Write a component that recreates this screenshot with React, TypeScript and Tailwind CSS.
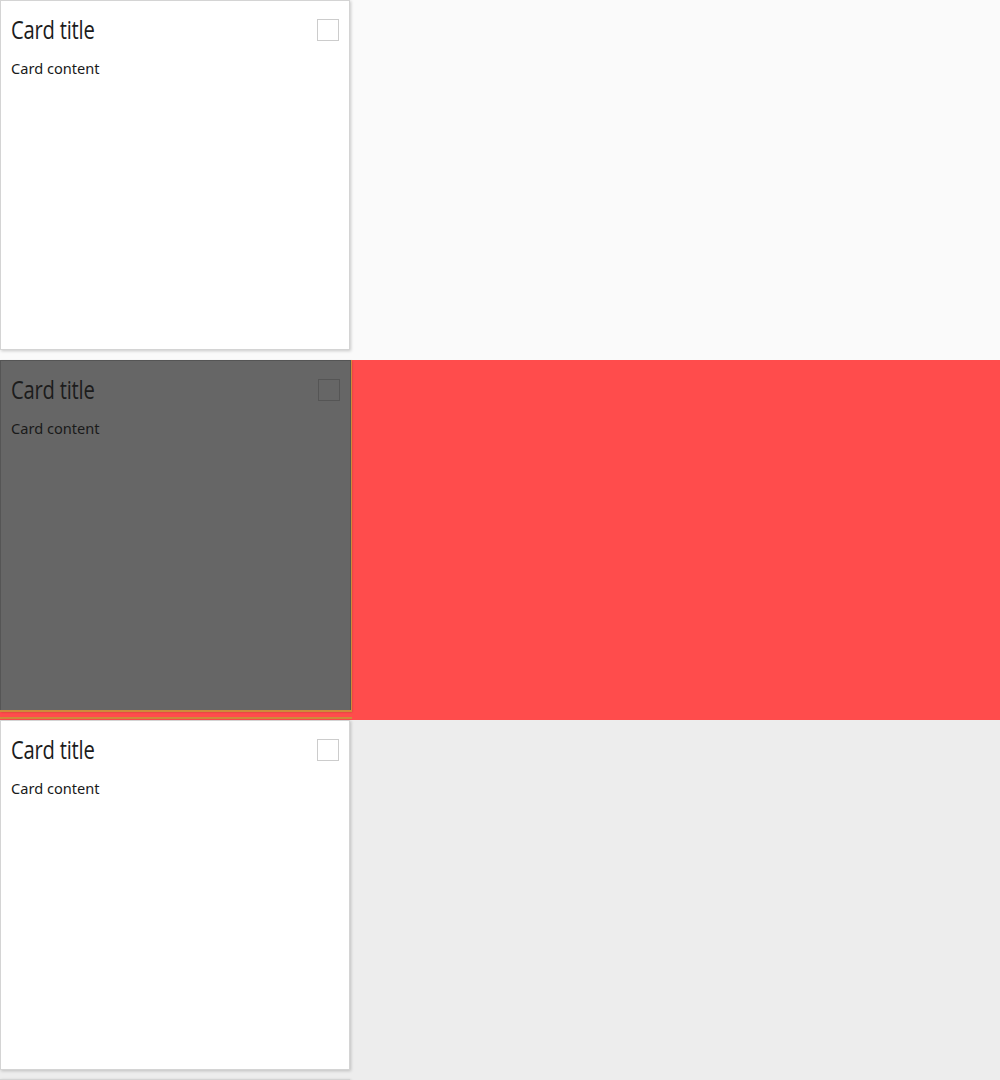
import React from "react";

function Card({ dark = false, empty = false }: { dark?: boolean; empty?: boolean }) {
  return (
    <div
      className={
        dark
          ? "relative shrink-0 w-[351px] h-[351px] bg-[#666666] border border-[#555555] shadow-[1px_1px_2px_rgba(0,0,0,0.25)]"
          : "relative shrink-0 w-[350px] h-[350px] bg-white border border-[#d4d4d4] shadow-[1px_1px_3px_rgba(0,0,0,0.2)]"
      }
    >
      {!empty && (
        <>
          <div className="flex items-start justify-between pl-[10px] pr-[10px] pt-[12px]">
            <div
              className="inline-block origin-left scale-x-[0.81] text-[25px] leading-[32px] text-[#1c1c1c] tracking-[-0.3px]"
              style={{ fontFamily: '"Open Sans", "Noto Sans", sans-serif', fontWeight: 400 }}
            >
              Card title
            </div>
            <div
              className={
                dark
                  ? "mt-[6px] w-[22px] h-[22px] border border-[#555555]"
                  : "mt-[6px] w-[22px] h-[22px] border border-[#cccccc]"
              }
            />
          </div>
          <div
            className="pl-[10px] mt-[14px] text-[14.6px] leading-[18px] text-[#1a1a1a]"
            style={{ fontFamily: '"Noto Sans", "Open Sans", sans-serif' }}
          >
            Card content
          </div>
        </>
      )}
    </div>
  );
}

export default function App() {
  return (
    <div className="w-[1000px] h-[1080px] overflow-hidden">
      <div className="h-[360px] bg-[#fafafa]">
        <Card />
      </div>
      <div className="relative h-[360px] bg-[#ff4c4c]">
        <Card dark />
        <div className="absolute left-0 top-[350px] w-[352px] h-[2px] bg-[#d08a3a]" />
        <div className="absolute left-[351px] top-0 w-[1px] h-[352px] bg-[#d08a3a]" />
        <div className="absolute left-0 top-[357px] w-[352px] h-[2px] bg-[#d08a3a]" />
      </div>
      <div className="h-[360px] bg-[#ededed] flex flex-col gap-[9px]">
        <Card />
        <Card empty />
      </div>
    </div>
  );
}
